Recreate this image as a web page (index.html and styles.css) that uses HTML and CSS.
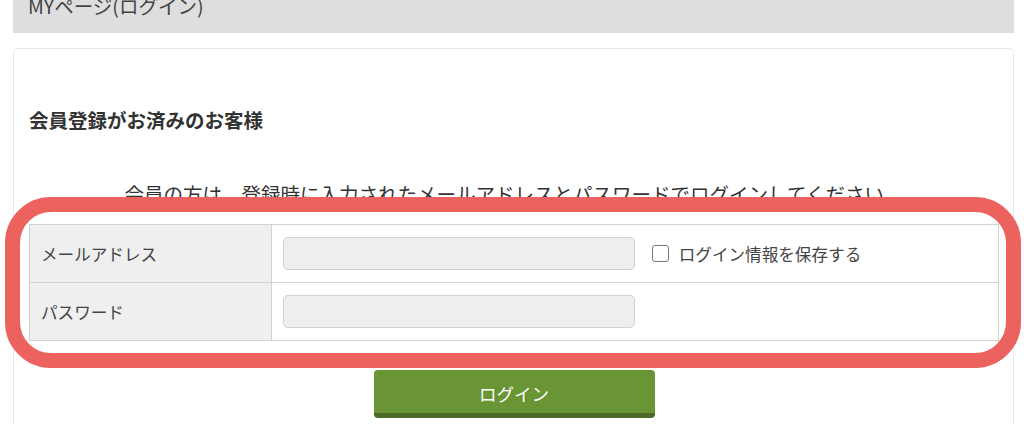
FILE: index.html
```html
<!DOCTYPE html>
<html lang="ja">
<head>
  <meta charset="UTF-8" />
  <meta name="viewport" content="width=device-width, initial-scale=1.0"/>
  <title>MYページ(ログイン)</title>
  <link rel="stylesheet" href="styles.css">
</head>
<body>
  <div id="page">
    <div id="pageTitle"><span>MYページ(ログイン)</span></div>

    <div id="loginBox">
      <h3>会員登録がお済みのお客様</h3>
      <p class="lead">会員の方は、登録時に入力されたメールアドレスとパスワードでログインしてください。</p>

      <table class="login-table">
        <tr>
          <th>メールアドレス</th>
          <td>
            <input type="text" class="field">
            <label class="remember"><span class="check"></span>ログイン情報を保存する</label>
          </td>
        </tr>
        <tr>
          <th>パスワード</th>
          <td><input type="password" class="field"></td>
        </tr>
      </table>

      <div class="btn-row">
        <button class="login-btn">ログイン</button>
      </div>
    </div>
  </div>

  <div class="highlight"></div>
</body>
</html>
```

FILE: styles.css
```css
body {
  font-family: "Noto Sans CJK JP", "Noto Sans", sans-serif;
  background: #fff;
  color: #333;
  margin: 0;
  padding: 0;
  overflow: hidden;
}
#page {
  padding: 0 10px 0 13px;
}
#pageTitle {
  height: 33px;
  background: #dedede;
  margin-bottom: 15px;
  padding-left: 15px;
  font-size: 19.5px;
  line-height: 11px;
  color: #444;
}
#loginBox {
  border: 1px solid #e8e8e8;
  border-bottom: none;
  border-radius: 5px 5px 0 0;
  padding: 0 14px 0 15px;
  height: 376px;
  box-sizing: border-box;
}
h3 {
  margin: 0;
  padding-top: 57px;
  font-size: 19.5px;
  line-height: 28px;
  font-weight: bold;
  color: #333;
}
.lead {
  margin: 46px 0 16px;
  font-size: 19.5px;
  line-height: 28px;
  text-align: center;
  color: #333;
}
.login-table {
  width: 100%;
  border-collapse: collapse;
  border: 1px solid #d2d2d2;
}
.login-table th,
.login-table td {
  border: 1px solid #d2d2d2;
  height: 57px;
  padding: 0;
  font-size: 16.6px;
  font-weight: normal;
  text-align: left;
}
.login-table th {
  width: 230px;
  background: #efefef;
  padding-left: 11px;
  color: #444;
}
.login-table td {
  padding-left: 11px;
}
.field {
  width: 352px;
  height: 33px;
  box-sizing: border-box;
  background: #eee;
  border: 1px solid #d0d0d0;
  border-radius: 5px;
  vertical-align: middle;
}
.remember {
  display: inline-flex;
  align-items: center;
  margin-left: 13px;
  vertical-align: middle;
  color: #444;
}
.check {
  width: 17px;
  height: 17px;
  box-sizing: border-box;
  border: 1.5px solid #777;
  border-radius: 3px;
  margin-right: 10px;
}
.btn-row {
  margin-top: 29px;
  text-align: center;
}
.login-btn {
  width: 281px;
  height: 48px;
  background: #6a9535;
  border: none;
  border-bottom: 5px solid #4a6a25;
  border-radius: 4px;
  color: #fff;
  font-family: inherit;
  font-size: 17.5px;
  padding-top: 4px;
}
.highlight {
  position: absolute;
  left: 5px;
  top: 197px;
  width: 1016px;
  height: 171px;
  box-sizing: border-box;
  border: 15px solid #ec625e;
  border-radius: 46px;
}
```
